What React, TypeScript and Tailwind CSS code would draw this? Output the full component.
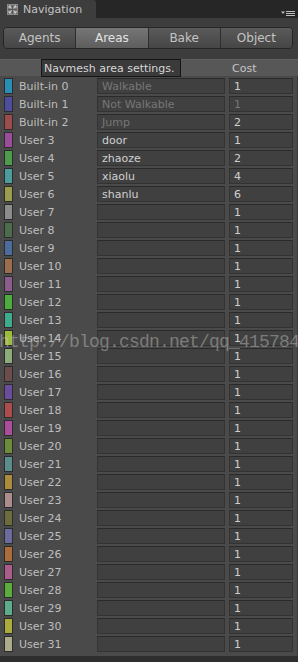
import React from 'react';

type Area = { label: string; color: string; name: string; cost: string; locked?: boolean };

const colors = [
  '#2a8db5', '#4c4ca0', '#9c4c4c', '#9c4c9c', '#4c9c4c', '#4c9c9c', '#9c9c4c', '#8c8c8c',
  '#4c6c4c', '#4c6c9c', '#9c6c4c', '#8c5c8c', '#4cac3c', '#3cac8c', '#9cbc3c', '#8cac7c',
  '#6c4c4c', '#6c4c9c', '#ac4c4c', '#ac4c9c', '#6c8c3c', '#5c8c8c', '#ac8c3c', '#ac8c8c',
  '#6c6c3c', '#6c6c9c', '#ac6c3c', '#ac5c8c', '#5cac3c', '#5cac8c', '#acac3c', '#acac8c',
];

const named: Record<number, [string, string]> = {
  0: ['Walkable', '1'],
  1: ['Not Walkable', '1'],
  2: ['Jump', '2'],
  3: ['door', '1'],
  4: ['zhaoze', '2'],
  5: ['xiaolu', '4'],
  6: ['shanlu', '6'],
};

const areas: Area[] = colors.map((color, i) => ({
  label: i < 3 ? `Built-in ${i}` : `User ${i}`,
  color,
  name: named[i]?.[0] ?? '',
  cost: named[i]?.[1] ?? '1',
  locked: i < 3,
}));

const tabs = ['Agents', 'Areas', 'Bake', 'Object'];

function NavIcon() {
  return (
    <svg width="11" height="11" viewBox="0 0 11 11" className="shrink-0">
      <rect x="0.5" y="0.5" width="10" height="10" fill="#5a5a5a" stroke="#8a8a8a" />
      <path d="M2 2 L4.5 4.5 M9 2 L6.5 4.5 M2 9 L4.5 6.5 M9 9 L6.5 6.5" stroke="#d0d0d0" strokeWidth="1.2" />
      <path d="M2 2 h2.5 M2 2 v2.5 M9 2 h-2.5 M9 2 v2.5 M2 9 h2.5 M2 9 v-2.5 M9 9 h-2.5 M9 9 v-2.5" stroke="#d0d0d0" strokeWidth="1" />
    </svg>
  );
}

function MenuIcon() {
  return (
    <svg width="14" height="7" viewBox="0 0 14 7">
      <path d="M0 1.5 L4 1.5 L2 4 Z" fill="#bdbdbd" />
      <path d="M5 1.5 H14 M5 3.5 H14 M5 5.5 H14" stroke="#bdbdbd" strokeWidth="1" />
    </svg>
  );
}

export default function App() {
  return (
    <div
      className="relative w-[298px] h-[662px] bg-[#2a2a2a] overflow-hidden flex flex-col text-[11px] leading-none"
      style={{ fontFamily: '"DejaVu Sans", Verdana, sans-serif' }}
    >
      {/* Window tab bar */}
      <div className="h-[18px] flex items-stretch bg-[#262626] shrink-0">
        <div className="w-[96px] bg-[#3d3d3d] rounded-tr-[3px] flex items-center gap-[5px] pl-[7px] text-[#c4c4c4]">
          <NavIcon />
          <span>Navigation</span>
        </div>
        <div className="flex-1 flex items-end justify-end pr-[3px] pb-[1px]">
          <MenuIcon />
        </div>
      </div>

      {/* Panel */}
      <div className="flex-1 flex flex-col bg-[#3d3d3d]">
        {/* Toolbar */}
        <div className="mt-[9px] ml-[3px] mr-[5px] h-[22px] flex rounded-[4px] border border-[#262626] overflow-hidden">
          {tabs.map((t, i) => (
            <div
              key={t}
              className={`flex-1 flex items-center justify-center text-[12px] ${
                i > 0 ? 'border-l border-[#2e2e2e]' : ''
              } ${
                t === 'Areas'
                  ? 'bg-gradient-to-b from-[#767676] to-[#5e5e5e] text-[#e2e2e2]'
                  : 'bg-gradient-to-b from-[#5a5a5a] to-[#464646] text-[#c4c4c4]'
              }`}
            >
              {t}
            </div>
          ))}
        </div>

        {/* Column header */}
        <div className="mt-[10px] h-[17px] flex items-center bg-[#575757] border-t border-[#606060] shrink-0">
          <div className="w-[232px]" />
          <div className="text-[#c6c6c6]">Cost</div>
        </div>

        {/* Area rows */}
        <div className="flex-1 bg-[#4a4a4a] pt-[1px] border-r border-[#3a3a3a]">
          {areas.map((a) => (
            <div key={a.label} className="h-[18px] flex items-center">
              <div
                className="ml-[4px] w-[9px] h-[16px] border border-[#2c2c2c]"
                style={{ backgroundColor: a.color }}
              />
              <div className="ml-[6px] w-[78px] text-[#bebebe] whitespace-nowrap">{a.label}</div>
              <div
                className={`w-[128px] h-[16px] flex items-center pl-[4px] bg-[#404040] border border-[#333333] border-t-[#2a2a2a] ${
                  a.locked ? 'text-[#777777]' : 'text-[#d0d0d0]'
                }`}
              >
                {a.name}
              </div>
              <div
                className={`ml-[4px] w-[64px] h-[16px] flex items-center pl-[4px] bg-[#404040] border border-[#333333] border-t-[#2a2a2a] ${
                  a.label === 'Built-in 1' ? 'text-[#777777]' : 'text-[#d0d0d0]'
                }`}
              >
                {a.cost}
              </div>
            </div>
          ))}
        </div>
      </div>
      <div className="h-[6px] bg-[#2e2e2e] shrink-0" />

      {/* Tooltip */}
      <div className="absolute left-[41px] top-[59px] w-[140px] h-[18px] bg-[#3a3a3a] border border-[#151515] flex items-center pl-[2px] text-[#d6d6d6] whitespace-nowrap">
        Navmesh area settings.
      </div>

      {/* Watermark */}
      <div
        className="absolute left-[-1px] top-[333px] text-[18px] tracking-[-0.8px] text-[#c8c8c8]/45 whitespace-nowrap pointer-events-none"
        style={{ fontFamily: '"Liberation Mono", "Courier New", monospace' }}
      >
        http://blog.csdn.net/qq_415784
      </div>
    </div>
  );
}
